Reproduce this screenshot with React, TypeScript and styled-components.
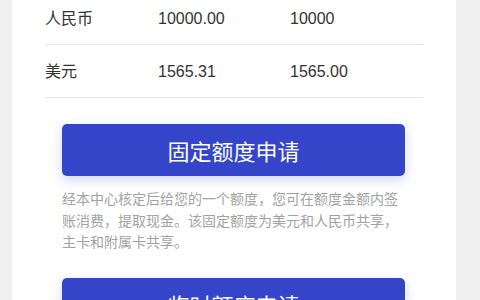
import React from "react";
import styled, { createGlobalStyle } from "styled-components";

const Global = createGlobalStyle`
  html, body { margin: 0; padding: 0; background: #f0f0f0; }
  body { font-family: "Liberation Sans", "Noto Sans CJK SC", sans-serif; overflow: hidden; }
`;

const Page = styled.div`
  width: 480px;
  height: 300px;
  padding: 0 24px 0 12px;
  box-sizing: border-box;
  overflow: hidden;
`;

const Card = styled.div`
  background: #ffffff;
  height: 100%;
  overflow: hidden;
`;

const Table = styled.div`
  margin-top: -8px;
  padding: 0 33px;
`;

const Row = styled.div`
  display: grid;
  grid-template-columns: 113px 132px 1fr;
  align-items: center;
  height: 53px;
  box-sizing: border-box;
  border-bottom: 1px solid #e6e6e6;
  font-size: 16px;
  color: #333333;
`;

const Cell = styled.span<{ $cjk?: boolean }>`
  display: block;
  line-height: 20px;
  padding: ${(p) => (p.$cjk ? "0 0 3px" : "2px 0 0")};
  font-family: ${(p) =>
    p.$cjk
      ? `"Noto Sans CJK SC", sans-serif`
      : `"Liberation Sans", "Noto Sans CJK SC", sans-serif`};
`;

const Section = styled.div`
  padding: 26px 51px 0 50px;
  display: flex;
  flex-direction: column;
`;

const ApplyButton = styled.button`
  height: 52px;
  border: none;
  border-radius: 5px;
  background: #3445c9;
  color: #ffffff;
  font-family: "Noto Sans CJK SC", sans-serif;
  font-size: 22px;
  box-shadow: 0 4px 12px rgba(52, 69, 201, 0.22);
  cursor: pointer;
`;

const Note = styled.p`
  margin: 12px 0 25px;
  font-family: "Noto Sans CJK SC", sans-serif;
  font-size: 14px;
  line-height: 21.5px;
  color: #a2a2a2;
`;

const rows = [
  { name: "人民币", a: "10000.00", b: "10000" },
  { name: "美元", a: "1565.31", b: "1565.00" },
];

export default function App() {
  return (
    <>
      <Global />
      <Page>
        <Card>
          <Table>
            {rows.map((r) => (
              <Row key={r.name}>
                <Cell $cjk>{r.name}</Cell>
                <Cell>{r.a}</Cell>
                <Cell>{r.b}</Cell>
              </Row>
            ))}
          </Table>
          <Section>
            <ApplyButton>固定额度申请</ApplyButton>
            <Note>
              经本中心核定后给您的一个额度，您可在额度金额内签账消费，提取现金。该固定额度为美元和人民币共享，主卡和附属卡共享。
            </Note>
            <ApplyButton>临时额度申请</ApplyButton>
          </Section>
        </Card>
      </Page>
    </>
  );
}
